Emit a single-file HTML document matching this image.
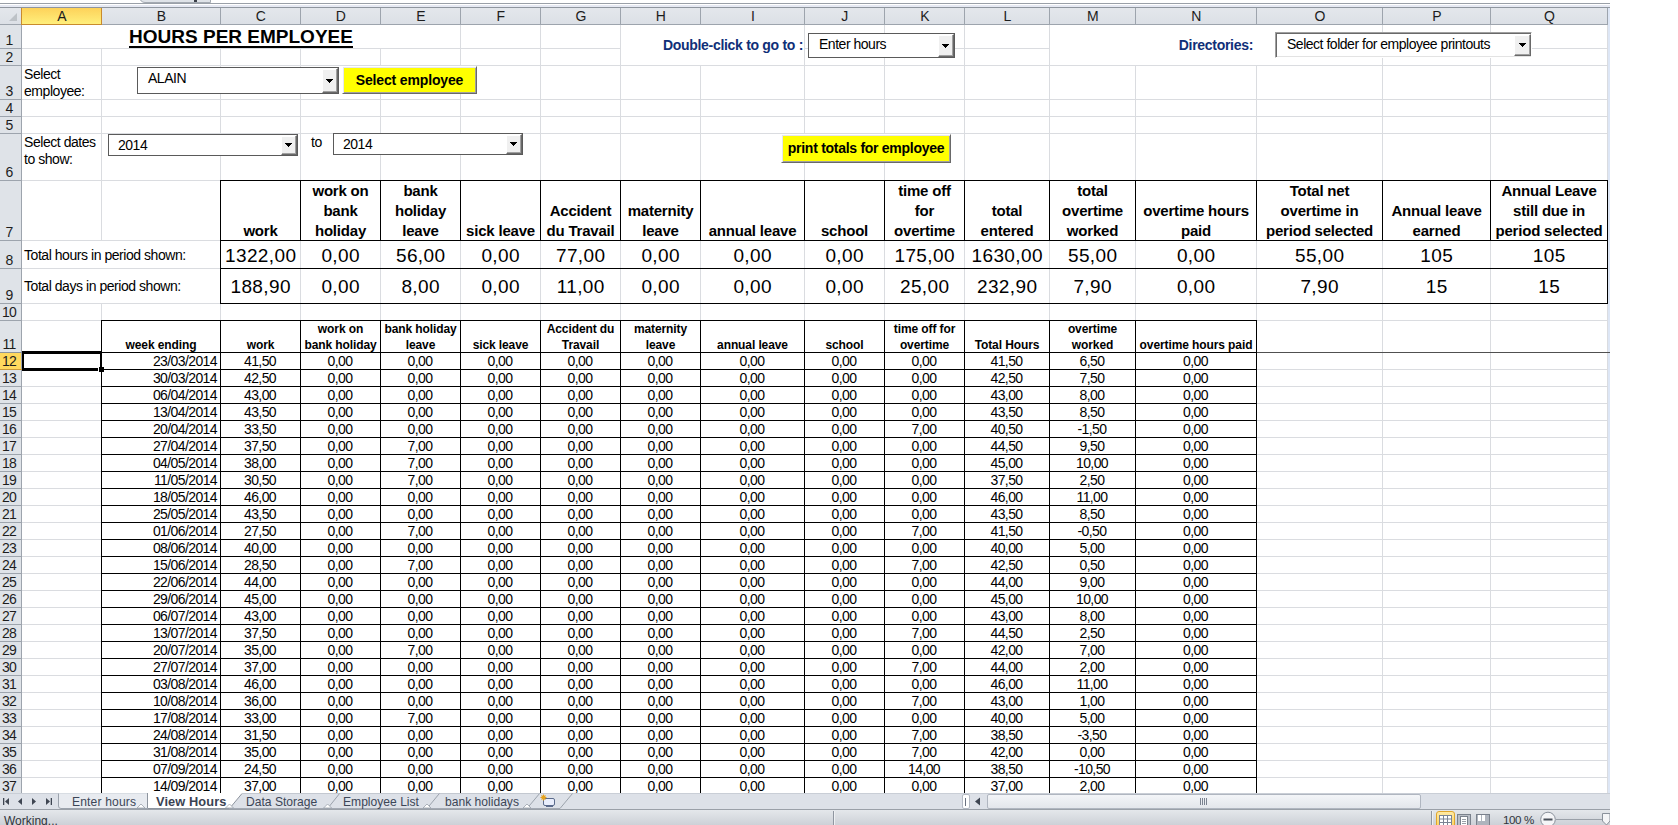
<!DOCTYPE html>
<html><head><meta charset="utf-8"><title>Hours per employee</title>
<style>
html,body{margin:0;padding:0;background:#fff}
body{width:1678px;height:825px;overflow:hidden;position:relative;font-family:"Liberation Sans",Arial,sans-serif;font-size:13.33px;color:#000}
#app{position:absolute;left:0;top:0;width:1610px;height:825px;overflow:hidden;background:#fff}
#app div,#app svg.abs{position:absolute;box-sizing:border-box}
.abs{position:absolute}
.t{display:flex;white-space:nowrap;line-height:17px;letter-spacing:-0.27px}
.ch{justify-content:center;align-items:flex-end;line-height:15px;color:#1d1d1d;font-size:14px;letter-spacing:-0.7px}
.title{justify-content:center;align-items:flex-end;font-weight:bold;font-size:19px;line-height:24px;letter-spacing:0}
.ul{border-bottom:2px solid #000;line-height:19px;display:inline-block;margin-bottom:1px}
.navy{justify-content:flex-end;align-items:center;font-weight:bold;color:#102f78;font-size:14px;letter-spacing:-0.3px;padding-bottom:1px}
.lbl{align-items:flex-end;font-size:14px;letter-spacing:-0.45px;padding-left:2px}
.mid{align-items:center}
.wrap{white-space:normal}
.cb{background:#fff;border:1px solid #5a5a5a}
.cbs{border-color:#a0a0a0 #fff #fff #a0a0a0;box-shadow:inset 1px 1px 0 #696969,inset -1px -1px 0 #e3e3e3}
.cbt{align-items:flex-start;font-size:14px;line-height:16px;letter-spacing:-0.48px}
.cbb{background:#f0f0f0;border:1px solid;border-color:#fff #696969 #696969 #fff;box-shadow:inset -1px -1px 0 #a0a0a0,inset 0 1px 0 #fff}
.yb{background:#ff0;border:1px solid;border-color:#fff #696969 #696969 #fff;box-shadow:inset 1px 1px 0 #e6e6ee,inset -1px -1px 0 #a0a0a0;justify-content:center;align-items:center;font-weight:bold;font-size:14px;letter-spacing:-0.15px;padding-bottom:0}
.h7{justify-content:center;align-items:flex-end;text-align:center;font-weight:bold;font-size:15px;line-height:20px;letter-spacing:-0.2px}
.big{justify-content:center;align-items:center;font-size:19px;line-height:24px;letter-spacing:0.4px;padding-left:0.4px;padding-top:2px}
.h11{justify-content:center;align-items:flex-end;text-align:center;font-weight:bold;font-size:12px;line-height:16px;letter-spacing:-0.1px}
.row{left:0;width:1610px;height:17px}
.d{top:0;height:17px;justify-content:center;align-items:flex-end;font-size:14px;letter-spacing:-0.6px;padding-right:1px}
.dr{justify-content:flex-end;padding-right:3px}
.tab{font-size:12.1px;color:#3c4657;align-items:flex-end;line-height:15px;letter-spacing:0}
.tabact{font-weight:bold;font-size:12.8px;color:#3a4252;letter-spacing:0.1px}
.sb{font-size:12.3px;color:#30343b;align-items:flex-start;line-height:16px;letter-spacing:0}
.sbz{font-size:11.6px;letter-spacing:-0.4px}
.rh{justify-content:center;align-items:flex-end;line-height:15px;color:#1d1d1d;font-size:14px;letter-spacing:-0.8px;padding-right:3px;padding-bottom:1px}
</style></head>
<body><div id="app">
<div class="abs" style="left:139px;top:-7px;width:72px;height:10px;background:#dfe3e8;border:1px solid #a4aab2;border-radius:0 0 0 6px;box-sizing:border-box"></div>
<div style="left:194px;top:0px;width:3px;height:2px;background:#3a3f48;"></div>
<div style="left:0px;top:3px;width:1610px;height:1px;background:#9aa0a8;"></div>
<div style="left:0px;top:4px;width:1610px;height:1px;background:#ffffff;"></div>
<div style="left:0px;top:5px;width:1610px;height:2px;background:#e6e9f3;"></div>
<div style="left:0px;top:7px;width:1610px;height:1px;background:#8f969f;"></div>
<div style="left:101px;top:49px;width:1px;height:192px;background:#dadce0;"></div>
<div style="left:101px;top:304px;width:1px;height:489px;background:#dadce0;"></div>
<div style="left:220px;top:49px;width:1px;height:744px;background:#dadce0;"></div>
<div style="left:300px;top:49px;width:1px;height:744px;background:#dadce0;"></div>
<div style="left:380px;top:49px;width:1px;height:744px;background:#dadce0;"></div>
<div style="left:460px;top:25px;width:1px;height:768px;background:#dadce0;"></div>
<div style="left:540px;top:25px;width:1px;height:768px;background:#dadce0;"></div>
<div style="left:620px;top:25px;width:1px;height:768px;background:#dadce0;"></div>
<div style="left:700px;top:66px;width:1px;height:727px;background:#dadce0;"></div>
<div style="left:804px;top:25px;width:1px;height:768px;background:#dadce0;"></div>
<div style="left:884px;top:25px;width:1px;height:768px;background:#dadce0;"></div>
<div style="left:964px;top:25px;width:1px;height:768px;background:#dadce0;"></div>
<div style="left:1049px;top:25px;width:1px;height:768px;background:#dadce0;"></div>
<div style="left:1135px;top:66px;width:1px;height:727px;background:#dadce0;"></div>
<div style="left:1256px;top:66px;width:1px;height:727px;background:#dadce0;"></div>
<div style="left:1382px;top:25px;width:1px;height:768px;background:#dadce0;"></div>
<div style="left:1490px;top:25px;width:1px;height:768px;background:#dadce0;"></div>
<div style="left:1607px;top:25px;width:1px;height:768px;background:#dadce0;"></div>
<div style="left:22px;top:48px;width:599px;height:1px;background:#dadce0;"></div>
<div style="left:804px;top:48px;width:246px;height:1px;background:#dadce0;"></div>
<div style="left:1382px;top:48px;width:226px;height:1px;background:#dadce0;"></div>
<div style="left:22px;top:65px;width:1586px;height:1px;background:#dadce0;"></div>
<div style="left:22px;top:99px;width:1586px;height:1px;background:#dadce0;"></div>
<div style="left:22px;top:116px;width:1586px;height:1px;background:#dadce0;"></div>
<div style="left:22px;top:133px;width:1586px;height:1px;background:#dadce0;"></div>
<div style="left:22px;top:180px;width:1586px;height:1px;background:#dadce0;"></div>
<div style="left:22px;top:240px;width:1586px;height:1px;background:#dadce0;"></div>
<div style="left:22px;top:268px;width:1586px;height:1px;background:#dadce0;"></div>
<div style="left:22px;top:303px;width:1586px;height:1px;background:#dadce0;"></div>
<div style="left:22px;top:320px;width:1586px;height:1px;background:#dadce0;"></div>
<div style="left:22px;top:352px;width:1586px;height:1px;background:#dadce0;"></div>
<div style="left:22px;top:369px;width:1586px;height:1px;background:#dadce0;"></div>
<div style="left:22px;top:386px;width:1586px;height:1px;background:#dadce0;"></div>
<div style="left:22px;top:403px;width:1586px;height:1px;background:#dadce0;"></div>
<div style="left:22px;top:420px;width:1586px;height:1px;background:#dadce0;"></div>
<div style="left:22px;top:437px;width:1586px;height:1px;background:#dadce0;"></div>
<div style="left:22px;top:454px;width:1586px;height:1px;background:#dadce0;"></div>
<div style="left:22px;top:471px;width:1586px;height:1px;background:#dadce0;"></div>
<div style="left:22px;top:488px;width:1586px;height:1px;background:#dadce0;"></div>
<div style="left:22px;top:505px;width:1586px;height:1px;background:#dadce0;"></div>
<div style="left:22px;top:522px;width:1586px;height:1px;background:#dadce0;"></div>
<div style="left:22px;top:539px;width:1586px;height:1px;background:#dadce0;"></div>
<div style="left:22px;top:556px;width:1586px;height:1px;background:#dadce0;"></div>
<div style="left:22px;top:573px;width:1586px;height:1px;background:#dadce0;"></div>
<div style="left:22px;top:590px;width:1586px;height:1px;background:#dadce0;"></div>
<div style="left:22px;top:607px;width:1586px;height:1px;background:#dadce0;"></div>
<div style="left:22px;top:624px;width:1586px;height:1px;background:#dadce0;"></div>
<div style="left:22px;top:641px;width:1586px;height:1px;background:#dadce0;"></div>
<div style="left:22px;top:658px;width:1586px;height:1px;background:#dadce0;"></div>
<div style="left:22px;top:675px;width:1586px;height:1px;background:#dadce0;"></div>
<div style="left:22px;top:692px;width:1586px;height:1px;background:#dadce0;"></div>
<div style="left:22px;top:709px;width:1586px;height:1px;background:#dadce0;"></div>
<div style="left:22px;top:726px;width:1586px;height:1px;background:#dadce0;"></div>
<div style="left:22px;top:743px;width:1586px;height:1px;background:#dadce0;"></div>
<div style="left:22px;top:760px;width:1586px;height:1px;background:#dadce0;"></div>
<div style="left:22px;top:777px;width:1586px;height:1px;background:#dadce0;"></div>
<div style="left:0px;top:8px;width:1608px;height:16px;background:linear-gradient(#e4e7ec,#dce0e6);"></div>
<div style="left:0px;top:24px;width:1608px;height:1px;background:#9da4ad;"></div>
<div style="left:21px;top:8px;width:1px;height:17px;background:#9da4ad;"></div>
<div style="left:101px;top:8px;width:1px;height:17px;background:#9da4ad;"></div>
<div style="left:220px;top:8px;width:1px;height:17px;background:#9da4ad;"></div>
<div style="left:300px;top:8px;width:1px;height:17px;background:#9da4ad;"></div>
<div style="left:380px;top:8px;width:1px;height:17px;background:#9da4ad;"></div>
<div style="left:460px;top:8px;width:1px;height:17px;background:#9da4ad;"></div>
<div style="left:540px;top:8px;width:1px;height:17px;background:#9da4ad;"></div>
<div style="left:620px;top:8px;width:1px;height:17px;background:#9da4ad;"></div>
<div style="left:700px;top:8px;width:1px;height:17px;background:#9da4ad;"></div>
<div style="left:804px;top:8px;width:1px;height:17px;background:#9da4ad;"></div>
<div style="left:884px;top:8px;width:1px;height:17px;background:#9da4ad;"></div>
<div style="left:964px;top:8px;width:1px;height:17px;background:#9da4ad;"></div>
<div style="left:1049px;top:8px;width:1px;height:17px;background:#9da4ad;"></div>
<div style="left:1135px;top:8px;width:1px;height:17px;background:#9da4ad;"></div>
<div style="left:1256px;top:8px;width:1px;height:17px;background:#9da4ad;"></div>
<div style="left:1382px;top:8px;width:1px;height:17px;background:#9da4ad;"></div>
<div style="left:1490px;top:8px;width:1px;height:17px;background:#9da4ad;"></div>
<div style="left:1607px;top:8px;width:1px;height:17px;background:#9da4ad;"></div>
<div style="left:22px;top:8px;width:79px;height:16px;background:linear-gradient(#fdd25a,#ffef7c);"></div>
<div style="left:21px;top:8px;width:1px;height:17px;background:#c98b2d;"></div>
<div style="left:101px;top:8px;width:1px;height:17px;background:#c98b2d;"></div>
<div style="left:21px;top:24px;width:81px;height:1px;background:#c98b2d;"></div>
<div class="t ch" style="left:22px;top:8px;width:79px;height:16px;">A</div>
<div class="t ch" style="left:102px;top:8px;width:118px;height:16px;">B</div>
<div class="t ch" style="left:221px;top:8px;width:79px;height:16px;">C</div>
<div class="t ch" style="left:301px;top:8px;width:79px;height:16px;">D</div>
<div class="t ch" style="left:381px;top:8px;width:79px;height:16px;">E</div>
<div class="t ch" style="left:461px;top:8px;width:79px;height:16px;">F</div>
<div class="t ch" style="left:541px;top:8px;width:79px;height:16px;">G</div>
<div class="t ch" style="left:621px;top:8px;width:79px;height:16px;">H</div>
<div class="t ch" style="left:701px;top:8px;width:103px;height:16px;">I</div>
<div class="t ch" style="left:805px;top:8px;width:79px;height:16px;">J</div>
<div class="t ch" style="left:885px;top:8px;width:79px;height:16px;">K</div>
<div class="t ch" style="left:965px;top:8px;width:84px;height:16px;">L</div>
<div class="t ch" style="left:1050px;top:8px;width:85px;height:16px;">M</div>
<div class="t ch" style="left:1136px;top:8px;width:120px;height:16px;">N</div>
<div class="t ch" style="left:1257px;top:8px;width:125px;height:16px;">O</div>
<div class="t ch" style="left:1383px;top:8px;width:107px;height:16px;">P</div>
<div class="t ch" style="left:1491px;top:8px;width:116px;height:16px;">Q</div>
<svg class="abs" style="left:8px;top:12px" width="10" height="10"><polygon points="9,1 9,9 1,9" fill="#bdc2c7"/></svg>
<div style="left:0px;top:25px;width:21px;height:768px;background:#dfe3e8;"></div>
<div style="left:21px;top:25px;width:1px;height:768px;background:#9da4ad;"></div>
<div style="left:0px;top:48px;width:21px;height:1px;background:#9da4ad;"></div>
<div style="left:0px;top:65px;width:21px;height:1px;background:#9da4ad;"></div>
<div style="left:0px;top:99px;width:21px;height:1px;background:#9da4ad;"></div>
<div style="left:0px;top:116px;width:21px;height:1px;background:#9da4ad;"></div>
<div style="left:0px;top:133px;width:21px;height:1px;background:#9da4ad;"></div>
<div style="left:0px;top:180px;width:21px;height:1px;background:#9da4ad;"></div>
<div style="left:0px;top:240px;width:21px;height:1px;background:#9da4ad;"></div>
<div style="left:0px;top:268px;width:21px;height:1px;background:#9da4ad;"></div>
<div style="left:0px;top:303px;width:21px;height:1px;background:#9da4ad;"></div>
<div style="left:0px;top:320px;width:21px;height:1px;background:#9da4ad;"></div>
<div style="left:0px;top:352px;width:21px;height:1px;background:#9da4ad;"></div>
<div style="left:0px;top:369px;width:21px;height:1px;background:#9da4ad;"></div>
<div style="left:0px;top:386px;width:21px;height:1px;background:#9da4ad;"></div>
<div style="left:0px;top:403px;width:21px;height:1px;background:#9da4ad;"></div>
<div style="left:0px;top:420px;width:21px;height:1px;background:#9da4ad;"></div>
<div style="left:0px;top:437px;width:21px;height:1px;background:#9da4ad;"></div>
<div style="left:0px;top:454px;width:21px;height:1px;background:#9da4ad;"></div>
<div style="left:0px;top:471px;width:21px;height:1px;background:#9da4ad;"></div>
<div style="left:0px;top:488px;width:21px;height:1px;background:#9da4ad;"></div>
<div style="left:0px;top:505px;width:21px;height:1px;background:#9da4ad;"></div>
<div style="left:0px;top:522px;width:21px;height:1px;background:#9da4ad;"></div>
<div style="left:0px;top:539px;width:21px;height:1px;background:#9da4ad;"></div>
<div style="left:0px;top:556px;width:21px;height:1px;background:#9da4ad;"></div>
<div style="left:0px;top:573px;width:21px;height:1px;background:#9da4ad;"></div>
<div style="left:0px;top:590px;width:21px;height:1px;background:#9da4ad;"></div>
<div style="left:0px;top:607px;width:21px;height:1px;background:#9da4ad;"></div>
<div style="left:0px;top:624px;width:21px;height:1px;background:#9da4ad;"></div>
<div style="left:0px;top:641px;width:21px;height:1px;background:#9da4ad;"></div>
<div style="left:0px;top:658px;width:21px;height:1px;background:#9da4ad;"></div>
<div style="left:0px;top:675px;width:21px;height:1px;background:#9da4ad;"></div>
<div style="left:0px;top:692px;width:21px;height:1px;background:#9da4ad;"></div>
<div style="left:0px;top:709px;width:21px;height:1px;background:#9da4ad;"></div>
<div style="left:0px;top:726px;width:21px;height:1px;background:#9da4ad;"></div>
<div style="left:0px;top:743px;width:21px;height:1px;background:#9da4ad;"></div>
<div style="left:0px;top:760px;width:21px;height:1px;background:#9da4ad;"></div>
<div style="left:0px;top:777px;width:21px;height:1px;background:#9da4ad;"></div>
<div style="left:0px;top:353px;width:21px;height:16px;background:#ffd85e;"></div>
<div style="left:0px;top:369px;width:22px;height:1px;background:#c9983a;"></div>
<div style="left:0px;top:352px;width:22px;height:1px;background:#8e949b;"></div>
<div class="t rh" style="left:0px;top:25px;width:21px;height:24px;">1</div>
<div class="t rh" style="left:0px;top:49px;width:21px;height:17px;">2</div>
<div class="t rh" style="left:0px;top:66px;width:21px;height:34px;">3</div>
<div class="t rh" style="left:0px;top:100px;width:21px;height:17px;">4</div>
<div class="t rh" style="left:0px;top:117px;width:21px;height:17px;">5</div>
<div class="t rh" style="left:0px;top:134px;width:21px;height:47px;">6</div>
<div class="t rh" style="left:0px;top:181px;width:21px;height:60px;">7</div>
<div class="t rh" style="left:0px;top:241px;width:21px;height:28px;">8</div>
<div class="t rh" style="left:0px;top:269px;width:21px;height:35px;">9</div>
<div class="t rh" style="left:0px;top:304px;width:21px;height:17px;">10</div>
<div class="t rh" style="left:0px;top:321px;width:21px;height:32px;">11</div>
<div class="t rh" style="left:0px;top:353px;width:21px;height:17px;">12</div>
<div class="t rh" style="left:0px;top:370px;width:21px;height:17px;">13</div>
<div class="t rh" style="left:0px;top:387px;width:21px;height:17px;">14</div>
<div class="t rh" style="left:0px;top:404px;width:21px;height:17px;">15</div>
<div class="t rh" style="left:0px;top:421px;width:21px;height:17px;">16</div>
<div class="t rh" style="left:0px;top:438px;width:21px;height:17px;">17</div>
<div class="t rh" style="left:0px;top:455px;width:21px;height:17px;">18</div>
<div class="t rh" style="left:0px;top:472px;width:21px;height:17px;">19</div>
<div class="t rh" style="left:0px;top:489px;width:21px;height:17px;">20</div>
<div class="t rh" style="left:0px;top:506px;width:21px;height:17px;">21</div>
<div class="t rh" style="left:0px;top:523px;width:21px;height:17px;">22</div>
<div class="t rh" style="left:0px;top:540px;width:21px;height:17px;">23</div>
<div class="t rh" style="left:0px;top:557px;width:21px;height:17px;">24</div>
<div class="t rh" style="left:0px;top:574px;width:21px;height:17px;">25</div>
<div class="t rh" style="left:0px;top:591px;width:21px;height:17px;">26</div>
<div class="t rh" style="left:0px;top:608px;width:21px;height:17px;">27</div>
<div class="t rh" style="left:0px;top:625px;width:21px;height:17px;">28</div>
<div class="t rh" style="left:0px;top:642px;width:21px;height:17px;">29</div>
<div class="t rh" style="left:0px;top:659px;width:21px;height:17px;">30</div>
<div class="t rh" style="left:0px;top:676px;width:21px;height:17px;">31</div>
<div class="t rh" style="left:0px;top:693px;width:21px;height:17px;">32</div>
<div class="t rh" style="left:0px;top:710px;width:21px;height:17px;">33</div>
<div class="t rh" style="left:0px;top:727px;width:21px;height:17px;">34</div>
<div class="t rh" style="left:0px;top:744px;width:21px;height:17px;">35</div>
<div class="t rh" style="left:0px;top:761px;width:21px;height:17px;">36</div>
<div class="t rh" style="left:0px;top:778px;width:21px;height:17px;">37</div>
<div style="left:1608px;top:8px;width:2px;height:785px;background:#dde6f5;"></div>
<div class="t title" style="left:22px;top:25px;width:438px;height:24px;"><span class="ul">HOURS PER EMPLOYEE</span></div>
<div class="t navy" style="left:621px;top:25px;width:183px;height:41px;padding-right:1px">Double-click to go to :</div>
<div class="t navy" style="left:1050px;top:25px;width:206px;height:41px;padding-right:3px;letter-spacing:-0.3px">Directories:</div>
<div class="t lbl wrap" style="left:22px;top:66px;width:79px;height:34px;">Select<br>employee:</div>
<div class="t lbl wrap" style="left:22px;top:134px;width:79px;height:47px;align-items:flex-start">Select dates<br>to show:</div>
<div class="t lbl" style="left:309px;top:134px;width:30px;height:17px;">to</div>
<div class="t lbl mid" style="left:22px;top:241px;width:198px;height:28px;">Total hours in period shown:</div>
<div class="t lbl mid" style="left:22px;top:269px;width:198px;height:35px;">Total days in period shown:</div>
<div class="cb" style="left:137px;top:67px;width:202px;height:27px"><div class="t cbt" style="left:10px;top:2px;height:16px;width:172px">ALAIN</div><div class="cbb" style="right:0;top:0;width:16px;height:25px"><svg class="abs" style="left:3px;top:10px" width="7" height="4"><path d="M0,0H7V1H6V2H5V3H4V4H3V3H2V2H1V1H0Z" fill="#000"/></svg></div></div>
<div class="cb" style="left:108px;top:134px;width:190px;height:22px"><div class="t cbt" style="left:9px;top:2px;height:16px;width:160px">2014</div><div class="cbb" style="right:0;top:0;width:16px;height:20px"><svg class="abs" style="left:3px;top:7px" width="7" height="4"><path d="M0,0H7V1H6V2H5V3H4V4H3V3H2V2H1V1H0Z" fill="#000"/></svg></div></div>
<div class="cb" style="left:333px;top:133px;width:190px;height:22px"><div class="t cbt" style="left:9px;top:2px;height:16px;width:160px">2014</div><div class="cbb" style="right:0;top:0;width:16px;height:20px"><svg class="abs" style="left:3px;top:7px" width="7" height="4"><path d="M0,0H7V1H6V2H5V3H4V4H3V3H2V2H1V1H0Z" fill="#000"/></svg></div></div>
<div class="cb" style="left:808px;top:33px;width:147px;height:25px"><div class="t cbt" style="left:10px;top:2px;height:16px;width:117px">Enter hours</div><div class="cbb" style="right:0;top:0;width:16px;height:23px"><svg class="abs" style="left:3px;top:9px" width="7" height="4"><path d="M0,0H7V1H6V2H5V3H4V4H3V3H2V2H1V1H0Z" fill="#000"/></svg></div></div>
<div class="cb cbs" style="left:1275px;top:32px;width:257px;height:26px"><div class="t cbt" style="left:11px;top:3px;height:16px;width:226px">Select folder for employee printouts</div><div class="cbb" style="right:0;top:1px;width:17px;height:22px"><svg class="abs" style="left:4px;top:8px" width="7" height="4"><path d="M0,0H7V1H6V2H5V3H4V4H3V3H2V2H1V1H0Z" fill="#000"/></svg></div></div>
<div class="yb t" style="left:342px;top:66px;width:135px;height:28px">Select employee</div>
<div class="yb t" style="left:781px;top:134px;width:170px;height:29px"><span style="letter-spacing:-0.28px">print totals for employee</span></div>
<div class="t h7" style="left:221px;top:181px;width:79px;height:60px;">work</div>
<div class="t big" style="left:221px;top:241px;width:79px;height:28px;">1322,00</div>
<div class="t big" style="left:221px;top:269px;width:79px;height:35px;padding-top:0">188,90</div>
<div class="t h7" style="left:301px;top:181px;width:79px;height:60px;">work on<br>bank<br>holiday</div>
<div class="t big" style="left:301px;top:241px;width:79px;height:28px;">0,00</div>
<div class="t big" style="left:301px;top:269px;width:79px;height:35px;padding-top:0">0,00</div>
<div class="t h7" style="left:381px;top:181px;width:79px;height:60px;">bank<br>holiday<br>leave</div>
<div class="t big" style="left:381px;top:241px;width:79px;height:28px;">56,00</div>
<div class="t big" style="left:381px;top:269px;width:79px;height:35px;padding-top:0">8,00</div>
<div class="t h7" style="left:461px;top:181px;width:79px;height:60px;">sick leave</div>
<div class="t big" style="left:461px;top:241px;width:79px;height:28px;">0,00</div>
<div class="t big" style="left:461px;top:269px;width:79px;height:35px;padding-top:0">0,00</div>
<div class="t h7" style="left:541px;top:181px;width:79px;height:60px;">Accident<br>du Travail</div>
<div class="t big" style="left:541px;top:241px;width:79px;height:28px;">77,00</div>
<div class="t big" style="left:541px;top:269px;width:79px;height:35px;padding-top:0">11,00</div>
<div class="t h7" style="left:621px;top:181px;width:79px;height:60px;">maternity<br>leave</div>
<div class="t big" style="left:621px;top:241px;width:79px;height:28px;">0,00</div>
<div class="t big" style="left:621px;top:269px;width:79px;height:35px;padding-top:0">0,00</div>
<div class="t h7" style="left:701px;top:181px;width:103px;height:60px;">annual leave</div>
<div class="t big" style="left:701px;top:241px;width:103px;height:28px;">0,00</div>
<div class="t big" style="left:701px;top:269px;width:103px;height:35px;padding-top:0">0,00</div>
<div class="t h7" style="left:805px;top:181px;width:79px;height:60px;">school</div>
<div class="t big" style="left:805px;top:241px;width:79px;height:28px;">0,00</div>
<div class="t big" style="left:805px;top:269px;width:79px;height:35px;padding-top:0">0,00</div>
<div class="t h7" style="left:885px;top:181px;width:79px;height:60px;">time off<br>for<br>overtime</div>
<div class="t big" style="left:885px;top:241px;width:79px;height:28px;">175,00</div>
<div class="t big" style="left:885px;top:269px;width:79px;height:35px;padding-top:0">25,00</div>
<div class="t h7" style="left:965px;top:181px;width:84px;height:60px;">total<br>entered</div>
<div class="t big" style="left:965px;top:241px;width:84px;height:28px;">1630,00</div>
<div class="t big" style="left:965px;top:269px;width:84px;height:35px;padding-top:0">232,90</div>
<div class="t h7" style="left:1050px;top:181px;width:85px;height:60px;">total<br>overtime<br>worked</div>
<div class="t big" style="left:1050px;top:241px;width:85px;height:28px;">55,00</div>
<div class="t big" style="left:1050px;top:269px;width:85px;height:35px;padding-top:0">7,90</div>
<div class="t h7" style="left:1136px;top:181px;width:120px;height:60px;">overtime hours<br>paid</div>
<div class="t big" style="left:1136px;top:241px;width:120px;height:28px;">0,00</div>
<div class="t big" style="left:1136px;top:269px;width:120px;height:35px;padding-top:0">0,00</div>
<div class="t h7" style="left:1257px;top:181px;width:125px;height:60px;">Total net<br>overtime in<br>period selected</div>
<div class="t big" style="left:1257px;top:241px;width:125px;height:28px;">55,00</div>
<div class="t big" style="left:1257px;top:269px;width:125px;height:35px;padding-top:0">7,90</div>
<div class="t h7" style="left:1383px;top:181px;width:107px;height:60px;">Annual leave<br>earned</div>
<div class="t big" style="left:1383px;top:241px;width:107px;height:28px;">105</div>
<div class="t big" style="left:1383px;top:269px;width:107px;height:35px;padding-top:0">15</div>
<div class="t h7" style="left:1491px;top:181px;width:116px;height:60px;">Annual Leave<br>still due in<br>period selected</div>
<div class="t big" style="left:1491px;top:241px;width:116px;height:28px;">105</div>
<div class="t big" style="left:1491px;top:269px;width:116px;height:35px;padding-top:0">15</div>
<div style="left:220px;top:180px;width:1388px;height:1px;background:#000;"></div>
<div style="left:220px;top:240px;width:1388px;height:1px;background:#000;"></div>
<div style="left:220px;top:268px;width:1388px;height:1px;background:#000;"></div>
<div style="left:220px;top:303px;width:1388px;height:1px;background:#000;"></div>
<div style="left:220px;top:180px;width:1px;height:61px;background:#000;"></div>
<div style="left:300px;top:180px;width:1px;height:61px;background:#000;"></div>
<div style="left:380px;top:180px;width:1px;height:61px;background:#000;"></div>
<div style="left:460px;top:180px;width:1px;height:61px;background:#000;"></div>
<div style="left:540px;top:180px;width:1px;height:61px;background:#000;"></div>
<div style="left:620px;top:180px;width:1px;height:61px;background:#000;"></div>
<div style="left:700px;top:180px;width:1px;height:61px;background:#000;"></div>
<div style="left:804px;top:180px;width:1px;height:61px;background:#000;"></div>
<div style="left:884px;top:180px;width:1px;height:61px;background:#000;"></div>
<div style="left:964px;top:180px;width:1px;height:61px;background:#000;"></div>
<div style="left:1049px;top:180px;width:1px;height:61px;background:#000;"></div>
<div style="left:1135px;top:180px;width:1px;height:61px;background:#000;"></div>
<div style="left:1256px;top:180px;width:1px;height:61px;background:#000;"></div>
<div style="left:1382px;top:180px;width:1px;height:61px;background:#000;"></div>
<div style="left:1490px;top:180px;width:1px;height:61px;background:#000;"></div>
<div style="left:1607px;top:180px;width:1px;height:61px;background:#000;"></div>
<div style="left:220px;top:180px;width:1px;height:124px;background:#000;"></div>
<div style="left:1607px;top:180px;width:1px;height:124px;background:#000;"></div>
<div class="t h11" style="left:102px;top:321px;width:118px;height:32px;">week ending</div>
<div class="t h11" style="left:221px;top:321px;width:79px;height:32px;">work</div>
<div class="t h11" style="left:301px;top:321px;width:79px;height:32px;">work on<br>bank holiday</div>
<div class="t h11" style="left:381px;top:321px;width:79px;height:32px;">bank holiday<br>leave</div>
<div class="t h11" style="left:461px;top:321px;width:79px;height:32px;">sick leave</div>
<div class="t h11" style="left:541px;top:321px;width:79px;height:32px;">Accident du<br>Travail</div>
<div class="t h11" style="left:621px;top:321px;width:79px;height:32px;">maternity<br>leave</div>
<div class="t h11" style="left:701px;top:321px;width:103px;height:32px;">annual leave</div>
<div class="t h11" style="left:805px;top:321px;width:79px;height:32px;">school</div>
<div class="t h11" style="left:885px;top:321px;width:79px;height:32px;">time off for<br>overtime</div>
<div class="t h11" style="left:965px;top:321px;width:84px;height:32px;">Total Hours</div>
<div class="t h11" style="left:1050px;top:321px;width:85px;height:32px;">overtime<br>worked</div>
<div class="t h11" style="left:1136px;top:321px;width:120px;height:32px;">overtime hours paid</div>
<div class="row" style="top:353px"><div class="t d dr" style="left:102px;width:118px">23/03/2014</div><div class="t d" style="left:221px;width:79px">41,50</div><div class="t d" style="left:301px;width:79px">0,00</div><div class="t d" style="left:381px;width:79px">0,00</div><div class="t d" style="left:461px;width:79px">0,00</div><div class="t d" style="left:541px;width:79px">0,00</div><div class="t d" style="left:621px;width:79px">0,00</div><div class="t d" style="left:701px;width:103px">0,00</div><div class="t d" style="left:805px;width:79px">0,00</div><div class="t d" style="left:885px;width:79px">0,00</div><div class="t d" style="left:965px;width:84px">41,50</div><div class="t d" style="left:1050px;width:85px">6,50</div><div class="t d" style="left:1136px;width:120px">0,00</div></div>
<div class="row" style="top:370px"><div class="t d dr" style="left:102px;width:118px">30/03/2014</div><div class="t d" style="left:221px;width:79px">42,50</div><div class="t d" style="left:301px;width:79px">0,00</div><div class="t d" style="left:381px;width:79px">0,00</div><div class="t d" style="left:461px;width:79px">0,00</div><div class="t d" style="left:541px;width:79px">0,00</div><div class="t d" style="left:621px;width:79px">0,00</div><div class="t d" style="left:701px;width:103px">0,00</div><div class="t d" style="left:805px;width:79px">0,00</div><div class="t d" style="left:885px;width:79px">0,00</div><div class="t d" style="left:965px;width:84px">42,50</div><div class="t d" style="left:1050px;width:85px">7,50</div><div class="t d" style="left:1136px;width:120px">0,00</div></div>
<div class="row" style="top:387px"><div class="t d dr" style="left:102px;width:118px">06/04/2014</div><div class="t d" style="left:221px;width:79px">43,00</div><div class="t d" style="left:301px;width:79px">0,00</div><div class="t d" style="left:381px;width:79px">0,00</div><div class="t d" style="left:461px;width:79px">0,00</div><div class="t d" style="left:541px;width:79px">0,00</div><div class="t d" style="left:621px;width:79px">0,00</div><div class="t d" style="left:701px;width:103px">0,00</div><div class="t d" style="left:805px;width:79px">0,00</div><div class="t d" style="left:885px;width:79px">0,00</div><div class="t d" style="left:965px;width:84px">43,00</div><div class="t d" style="left:1050px;width:85px">8,00</div><div class="t d" style="left:1136px;width:120px">0,00</div></div>
<div class="row" style="top:404px"><div class="t d dr" style="left:102px;width:118px">13/04/2014</div><div class="t d" style="left:221px;width:79px">43,50</div><div class="t d" style="left:301px;width:79px">0,00</div><div class="t d" style="left:381px;width:79px">0,00</div><div class="t d" style="left:461px;width:79px">0,00</div><div class="t d" style="left:541px;width:79px">0,00</div><div class="t d" style="left:621px;width:79px">0,00</div><div class="t d" style="left:701px;width:103px">0,00</div><div class="t d" style="left:805px;width:79px">0,00</div><div class="t d" style="left:885px;width:79px">0,00</div><div class="t d" style="left:965px;width:84px">43,50</div><div class="t d" style="left:1050px;width:85px">8,50</div><div class="t d" style="left:1136px;width:120px">0,00</div></div>
<div class="row" style="top:421px"><div class="t d dr" style="left:102px;width:118px">20/04/2014</div><div class="t d" style="left:221px;width:79px">33,50</div><div class="t d" style="left:301px;width:79px">0,00</div><div class="t d" style="left:381px;width:79px">0,00</div><div class="t d" style="left:461px;width:79px">0,00</div><div class="t d" style="left:541px;width:79px">0,00</div><div class="t d" style="left:621px;width:79px">0,00</div><div class="t d" style="left:701px;width:103px">0,00</div><div class="t d" style="left:805px;width:79px">0,00</div><div class="t d" style="left:885px;width:79px">7,00</div><div class="t d" style="left:965px;width:84px">40,50</div><div class="t d" style="left:1050px;width:85px">-1,50</div><div class="t d" style="left:1136px;width:120px">0,00</div></div>
<div class="row" style="top:438px"><div class="t d dr" style="left:102px;width:118px">27/04/2014</div><div class="t d" style="left:221px;width:79px">37,50</div><div class="t d" style="left:301px;width:79px">0,00</div><div class="t d" style="left:381px;width:79px">7,00</div><div class="t d" style="left:461px;width:79px">0,00</div><div class="t d" style="left:541px;width:79px">0,00</div><div class="t d" style="left:621px;width:79px">0,00</div><div class="t d" style="left:701px;width:103px">0,00</div><div class="t d" style="left:805px;width:79px">0,00</div><div class="t d" style="left:885px;width:79px">0,00</div><div class="t d" style="left:965px;width:84px">44,50</div><div class="t d" style="left:1050px;width:85px">9,50</div><div class="t d" style="left:1136px;width:120px">0,00</div></div>
<div class="row" style="top:455px"><div class="t d dr" style="left:102px;width:118px">04/05/2014</div><div class="t d" style="left:221px;width:79px">38,00</div><div class="t d" style="left:301px;width:79px">0,00</div><div class="t d" style="left:381px;width:79px">7,00</div><div class="t d" style="left:461px;width:79px">0,00</div><div class="t d" style="left:541px;width:79px">0,00</div><div class="t d" style="left:621px;width:79px">0,00</div><div class="t d" style="left:701px;width:103px">0,00</div><div class="t d" style="left:805px;width:79px">0,00</div><div class="t d" style="left:885px;width:79px">0,00</div><div class="t d" style="left:965px;width:84px">45,00</div><div class="t d" style="left:1050px;width:85px">10,00</div><div class="t d" style="left:1136px;width:120px">0,00</div></div>
<div class="row" style="top:472px"><div class="t d dr" style="left:102px;width:118px">11/05/2014</div><div class="t d" style="left:221px;width:79px">30,50</div><div class="t d" style="left:301px;width:79px">0,00</div><div class="t d" style="left:381px;width:79px">7,00</div><div class="t d" style="left:461px;width:79px">0,00</div><div class="t d" style="left:541px;width:79px">0,00</div><div class="t d" style="left:621px;width:79px">0,00</div><div class="t d" style="left:701px;width:103px">0,00</div><div class="t d" style="left:805px;width:79px">0,00</div><div class="t d" style="left:885px;width:79px">0,00</div><div class="t d" style="left:965px;width:84px">37,50</div><div class="t d" style="left:1050px;width:85px">2,50</div><div class="t d" style="left:1136px;width:120px">0,00</div></div>
<div class="row" style="top:489px"><div class="t d dr" style="left:102px;width:118px">18/05/2014</div><div class="t d" style="left:221px;width:79px">46,00</div><div class="t d" style="left:301px;width:79px">0,00</div><div class="t d" style="left:381px;width:79px">0,00</div><div class="t d" style="left:461px;width:79px">0,00</div><div class="t d" style="left:541px;width:79px">0,00</div><div class="t d" style="left:621px;width:79px">0,00</div><div class="t d" style="left:701px;width:103px">0,00</div><div class="t d" style="left:805px;width:79px">0,00</div><div class="t d" style="left:885px;width:79px">0,00</div><div class="t d" style="left:965px;width:84px">46,00</div><div class="t d" style="left:1050px;width:85px">11,00</div><div class="t d" style="left:1136px;width:120px">0,00</div></div>
<div class="row" style="top:506px"><div class="t d dr" style="left:102px;width:118px">25/05/2014</div><div class="t d" style="left:221px;width:79px">43,50</div><div class="t d" style="left:301px;width:79px">0,00</div><div class="t d" style="left:381px;width:79px">0,00</div><div class="t d" style="left:461px;width:79px">0,00</div><div class="t d" style="left:541px;width:79px">0,00</div><div class="t d" style="left:621px;width:79px">0,00</div><div class="t d" style="left:701px;width:103px">0,00</div><div class="t d" style="left:805px;width:79px">0,00</div><div class="t d" style="left:885px;width:79px">0,00</div><div class="t d" style="left:965px;width:84px">43,50</div><div class="t d" style="left:1050px;width:85px">8,50</div><div class="t d" style="left:1136px;width:120px">0,00</div></div>
<div class="row" style="top:523px"><div class="t d dr" style="left:102px;width:118px">01/06/2014</div><div class="t d" style="left:221px;width:79px">27,50</div><div class="t d" style="left:301px;width:79px">0,00</div><div class="t d" style="left:381px;width:79px">7,00</div><div class="t d" style="left:461px;width:79px">0,00</div><div class="t d" style="left:541px;width:79px">0,00</div><div class="t d" style="left:621px;width:79px">0,00</div><div class="t d" style="left:701px;width:103px">0,00</div><div class="t d" style="left:805px;width:79px">0,00</div><div class="t d" style="left:885px;width:79px">7,00</div><div class="t d" style="left:965px;width:84px">41,50</div><div class="t d" style="left:1050px;width:85px">-0,50</div><div class="t d" style="left:1136px;width:120px">0,00</div></div>
<div class="row" style="top:540px"><div class="t d dr" style="left:102px;width:118px">08/06/2014</div><div class="t d" style="left:221px;width:79px">40,00</div><div class="t d" style="left:301px;width:79px">0,00</div><div class="t d" style="left:381px;width:79px">0,00</div><div class="t d" style="left:461px;width:79px">0,00</div><div class="t d" style="left:541px;width:79px">0,00</div><div class="t d" style="left:621px;width:79px">0,00</div><div class="t d" style="left:701px;width:103px">0,00</div><div class="t d" style="left:805px;width:79px">0,00</div><div class="t d" style="left:885px;width:79px">0,00</div><div class="t d" style="left:965px;width:84px">40,00</div><div class="t d" style="left:1050px;width:85px">5,00</div><div class="t d" style="left:1136px;width:120px">0,00</div></div>
<div class="row" style="top:557px"><div class="t d dr" style="left:102px;width:118px">15/06/2014</div><div class="t d" style="left:221px;width:79px">28,50</div><div class="t d" style="left:301px;width:79px">0,00</div><div class="t d" style="left:381px;width:79px">7,00</div><div class="t d" style="left:461px;width:79px">0,00</div><div class="t d" style="left:541px;width:79px">0,00</div><div class="t d" style="left:621px;width:79px">0,00</div><div class="t d" style="left:701px;width:103px">0,00</div><div class="t d" style="left:805px;width:79px">0,00</div><div class="t d" style="left:885px;width:79px">7,00</div><div class="t d" style="left:965px;width:84px">42,50</div><div class="t d" style="left:1050px;width:85px">0,50</div><div class="t d" style="left:1136px;width:120px">0,00</div></div>
<div class="row" style="top:574px"><div class="t d dr" style="left:102px;width:118px">22/06/2014</div><div class="t d" style="left:221px;width:79px">44,00</div><div class="t d" style="left:301px;width:79px">0,00</div><div class="t d" style="left:381px;width:79px">0,00</div><div class="t d" style="left:461px;width:79px">0,00</div><div class="t d" style="left:541px;width:79px">0,00</div><div class="t d" style="left:621px;width:79px">0,00</div><div class="t d" style="left:701px;width:103px">0,00</div><div class="t d" style="left:805px;width:79px">0,00</div><div class="t d" style="left:885px;width:79px">0,00</div><div class="t d" style="left:965px;width:84px">44,00</div><div class="t d" style="left:1050px;width:85px">9,00</div><div class="t d" style="left:1136px;width:120px">0,00</div></div>
<div class="row" style="top:591px"><div class="t d dr" style="left:102px;width:118px">29/06/2014</div><div class="t d" style="left:221px;width:79px">45,00</div><div class="t d" style="left:301px;width:79px">0,00</div><div class="t d" style="left:381px;width:79px">0,00</div><div class="t d" style="left:461px;width:79px">0,00</div><div class="t d" style="left:541px;width:79px">0,00</div><div class="t d" style="left:621px;width:79px">0,00</div><div class="t d" style="left:701px;width:103px">0,00</div><div class="t d" style="left:805px;width:79px">0,00</div><div class="t d" style="left:885px;width:79px">0,00</div><div class="t d" style="left:965px;width:84px">45,00</div><div class="t d" style="left:1050px;width:85px">10,00</div><div class="t d" style="left:1136px;width:120px">0,00</div></div>
<div class="row" style="top:608px"><div class="t d dr" style="left:102px;width:118px">06/07/2014</div><div class="t d" style="left:221px;width:79px">43,00</div><div class="t d" style="left:301px;width:79px">0,00</div><div class="t d" style="left:381px;width:79px">0,00</div><div class="t d" style="left:461px;width:79px">0,00</div><div class="t d" style="left:541px;width:79px">0,00</div><div class="t d" style="left:621px;width:79px">0,00</div><div class="t d" style="left:701px;width:103px">0,00</div><div class="t d" style="left:805px;width:79px">0,00</div><div class="t d" style="left:885px;width:79px">0,00</div><div class="t d" style="left:965px;width:84px">43,00</div><div class="t d" style="left:1050px;width:85px">8,00</div><div class="t d" style="left:1136px;width:120px">0,00</div></div>
<div class="row" style="top:625px"><div class="t d dr" style="left:102px;width:118px">13/07/2014</div><div class="t d" style="left:221px;width:79px">37,50</div><div class="t d" style="left:301px;width:79px">0,00</div><div class="t d" style="left:381px;width:79px">0,00</div><div class="t d" style="left:461px;width:79px">0,00</div><div class="t d" style="left:541px;width:79px">0,00</div><div class="t d" style="left:621px;width:79px">0,00</div><div class="t d" style="left:701px;width:103px">0,00</div><div class="t d" style="left:805px;width:79px">0,00</div><div class="t d" style="left:885px;width:79px">7,00</div><div class="t d" style="left:965px;width:84px">44,50</div><div class="t d" style="left:1050px;width:85px">2,50</div><div class="t d" style="left:1136px;width:120px">0,00</div></div>
<div class="row" style="top:642px"><div class="t d dr" style="left:102px;width:118px">20/07/2014</div><div class="t d" style="left:221px;width:79px">35,00</div><div class="t d" style="left:301px;width:79px">0,00</div><div class="t d" style="left:381px;width:79px">7,00</div><div class="t d" style="left:461px;width:79px">0,00</div><div class="t d" style="left:541px;width:79px">0,00</div><div class="t d" style="left:621px;width:79px">0,00</div><div class="t d" style="left:701px;width:103px">0,00</div><div class="t d" style="left:805px;width:79px">0,00</div><div class="t d" style="left:885px;width:79px">0,00</div><div class="t d" style="left:965px;width:84px">42,00</div><div class="t d" style="left:1050px;width:85px">7,00</div><div class="t d" style="left:1136px;width:120px">0,00</div></div>
<div class="row" style="top:659px"><div class="t d dr" style="left:102px;width:118px">27/07/2014</div><div class="t d" style="left:221px;width:79px">37,00</div><div class="t d" style="left:301px;width:79px">0,00</div><div class="t d" style="left:381px;width:79px">0,00</div><div class="t d" style="left:461px;width:79px">0,00</div><div class="t d" style="left:541px;width:79px">0,00</div><div class="t d" style="left:621px;width:79px">0,00</div><div class="t d" style="left:701px;width:103px">0,00</div><div class="t d" style="left:805px;width:79px">0,00</div><div class="t d" style="left:885px;width:79px">7,00</div><div class="t d" style="left:965px;width:84px">44,00</div><div class="t d" style="left:1050px;width:85px">2,00</div><div class="t d" style="left:1136px;width:120px">0,00</div></div>
<div class="row" style="top:676px"><div class="t d dr" style="left:102px;width:118px">03/08/2014</div><div class="t d" style="left:221px;width:79px">46,00</div><div class="t d" style="left:301px;width:79px">0,00</div><div class="t d" style="left:381px;width:79px">0,00</div><div class="t d" style="left:461px;width:79px">0,00</div><div class="t d" style="left:541px;width:79px">0,00</div><div class="t d" style="left:621px;width:79px">0,00</div><div class="t d" style="left:701px;width:103px">0,00</div><div class="t d" style="left:805px;width:79px">0,00</div><div class="t d" style="left:885px;width:79px">0,00</div><div class="t d" style="left:965px;width:84px">46,00</div><div class="t d" style="left:1050px;width:85px">11,00</div><div class="t d" style="left:1136px;width:120px">0,00</div></div>
<div class="row" style="top:693px"><div class="t d dr" style="left:102px;width:118px">10/08/2014</div><div class="t d" style="left:221px;width:79px">36,00</div><div class="t d" style="left:301px;width:79px">0,00</div><div class="t d" style="left:381px;width:79px">0,00</div><div class="t d" style="left:461px;width:79px">0,00</div><div class="t d" style="left:541px;width:79px">0,00</div><div class="t d" style="left:621px;width:79px">0,00</div><div class="t d" style="left:701px;width:103px">0,00</div><div class="t d" style="left:805px;width:79px">0,00</div><div class="t d" style="left:885px;width:79px">7,00</div><div class="t d" style="left:965px;width:84px">43,00</div><div class="t d" style="left:1050px;width:85px">1,00</div><div class="t d" style="left:1136px;width:120px">0,00</div></div>
<div class="row" style="top:710px"><div class="t d dr" style="left:102px;width:118px">17/08/2014</div><div class="t d" style="left:221px;width:79px">33,00</div><div class="t d" style="left:301px;width:79px">0,00</div><div class="t d" style="left:381px;width:79px">7,00</div><div class="t d" style="left:461px;width:79px">0,00</div><div class="t d" style="left:541px;width:79px">0,00</div><div class="t d" style="left:621px;width:79px">0,00</div><div class="t d" style="left:701px;width:103px">0,00</div><div class="t d" style="left:805px;width:79px">0,00</div><div class="t d" style="left:885px;width:79px">0,00</div><div class="t d" style="left:965px;width:84px">40,00</div><div class="t d" style="left:1050px;width:85px">5,00</div><div class="t d" style="left:1136px;width:120px">0,00</div></div>
<div class="row" style="top:727px"><div class="t d dr" style="left:102px;width:118px">24/08/2014</div><div class="t d" style="left:221px;width:79px">31,50</div><div class="t d" style="left:301px;width:79px">0,00</div><div class="t d" style="left:381px;width:79px">0,00</div><div class="t d" style="left:461px;width:79px">0,00</div><div class="t d" style="left:541px;width:79px">0,00</div><div class="t d" style="left:621px;width:79px">0,00</div><div class="t d" style="left:701px;width:103px">0,00</div><div class="t d" style="left:805px;width:79px">0,00</div><div class="t d" style="left:885px;width:79px">7,00</div><div class="t d" style="left:965px;width:84px">38,50</div><div class="t d" style="left:1050px;width:85px">-3,50</div><div class="t d" style="left:1136px;width:120px">0,00</div></div>
<div class="row" style="top:744px"><div class="t d dr" style="left:102px;width:118px">31/08/2014</div><div class="t d" style="left:221px;width:79px">35,00</div><div class="t d" style="left:301px;width:79px">0,00</div><div class="t d" style="left:381px;width:79px">0,00</div><div class="t d" style="left:461px;width:79px">0,00</div><div class="t d" style="left:541px;width:79px">0,00</div><div class="t d" style="left:621px;width:79px">0,00</div><div class="t d" style="left:701px;width:103px">0,00</div><div class="t d" style="left:805px;width:79px">0,00</div><div class="t d" style="left:885px;width:79px">7,00</div><div class="t d" style="left:965px;width:84px">42,00</div><div class="t d" style="left:1050px;width:85px">0,00</div><div class="t d" style="left:1136px;width:120px">0,00</div></div>
<div class="row" style="top:761px"><div class="t d dr" style="left:102px;width:118px">07/09/2014</div><div class="t d" style="left:221px;width:79px">24,50</div><div class="t d" style="left:301px;width:79px">0,00</div><div class="t d" style="left:381px;width:79px">0,00</div><div class="t d" style="left:461px;width:79px">0,00</div><div class="t d" style="left:541px;width:79px">0,00</div><div class="t d" style="left:621px;width:79px">0,00</div><div class="t d" style="left:701px;width:103px">0,00</div><div class="t d" style="left:805px;width:79px">0,00</div><div class="t d" style="left:885px;width:79px">14,00</div><div class="t d" style="left:965px;width:84px">38,50</div><div class="t d" style="left:1050px;width:85px">-10,50</div><div class="t d" style="left:1136px;width:120px">0,00</div></div>
<div class="row" style="top:778px"><div class="t d dr" style="left:102px;width:118px">14/09/2014</div><div class="t d" style="left:221px;width:79px">37,00</div><div class="t d" style="left:301px;width:79px">0,00</div><div class="t d" style="left:381px;width:79px">0,00</div><div class="t d" style="left:461px;width:79px">0,00</div><div class="t d" style="left:541px;width:79px">0,00</div><div class="t d" style="left:621px;width:79px">0,00</div><div class="t d" style="left:701px;width:103px">0,00</div><div class="t d" style="left:805px;width:79px">0,00</div><div class="t d" style="left:885px;width:79px">0,00</div><div class="t d" style="left:965px;width:84px">37,00</div><div class="t d" style="left:1050px;width:85px">2,00</div><div class="t d" style="left:1136px;width:120px">0,00</div></div>
<div style="left:1257px;top:352px;width:353px;height:1px;background:#505050;"></div>
<div style="left:101px;top:320px;width:1156px;height:1px;background:#000;"></div>
<div style="left:101px;top:352px;width:1156px;height:1px;background:#000;"></div>
<div style="left:101px;top:369px;width:1156px;height:1px;background:#000;"></div>
<div style="left:101px;top:386px;width:1156px;height:1px;background:#000;"></div>
<div style="left:101px;top:403px;width:1156px;height:1px;background:#000;"></div>
<div style="left:101px;top:420px;width:1156px;height:1px;background:#000;"></div>
<div style="left:101px;top:437px;width:1156px;height:1px;background:#000;"></div>
<div style="left:101px;top:454px;width:1156px;height:1px;background:#000;"></div>
<div style="left:101px;top:471px;width:1156px;height:1px;background:#000;"></div>
<div style="left:101px;top:488px;width:1156px;height:1px;background:#000;"></div>
<div style="left:101px;top:505px;width:1156px;height:1px;background:#000;"></div>
<div style="left:101px;top:522px;width:1156px;height:1px;background:#000;"></div>
<div style="left:101px;top:539px;width:1156px;height:1px;background:#000;"></div>
<div style="left:101px;top:556px;width:1156px;height:1px;background:#000;"></div>
<div style="left:101px;top:573px;width:1156px;height:1px;background:#000;"></div>
<div style="left:101px;top:590px;width:1156px;height:1px;background:#000;"></div>
<div style="left:101px;top:607px;width:1156px;height:1px;background:#000;"></div>
<div style="left:101px;top:624px;width:1156px;height:1px;background:#000;"></div>
<div style="left:101px;top:641px;width:1156px;height:1px;background:#000;"></div>
<div style="left:101px;top:658px;width:1156px;height:1px;background:#000;"></div>
<div style="left:101px;top:675px;width:1156px;height:1px;background:#000;"></div>
<div style="left:101px;top:692px;width:1156px;height:1px;background:#000;"></div>
<div style="left:101px;top:709px;width:1156px;height:1px;background:#000;"></div>
<div style="left:101px;top:726px;width:1156px;height:1px;background:#000;"></div>
<div style="left:101px;top:743px;width:1156px;height:1px;background:#000;"></div>
<div style="left:101px;top:760px;width:1156px;height:1px;background:#000;"></div>
<div style="left:101px;top:777px;width:1156px;height:1px;background:#000;"></div>
<div style="left:101px;top:320px;width:1px;height:473px;background:#000;"></div>
<div style="left:220px;top:320px;width:1px;height:473px;background:#000;"></div>
<div style="left:300px;top:320px;width:1px;height:473px;background:#000;"></div>
<div style="left:380px;top:320px;width:1px;height:473px;background:#000;"></div>
<div style="left:460px;top:320px;width:1px;height:473px;background:#000;"></div>
<div style="left:540px;top:320px;width:1px;height:473px;background:#000;"></div>
<div style="left:620px;top:320px;width:1px;height:473px;background:#000;"></div>
<div style="left:700px;top:320px;width:1px;height:473px;background:#000;"></div>
<div style="left:804px;top:320px;width:1px;height:473px;background:#000;"></div>
<div style="left:884px;top:320px;width:1px;height:473px;background:#000;"></div>
<div style="left:964px;top:320px;width:1px;height:473px;background:#000;"></div>
<div style="left:1049px;top:320px;width:1px;height:473px;background:#000;"></div>
<div style="left:1135px;top:320px;width:1px;height:473px;background:#000;"></div>
<div style="left:1256px;top:320px;width:1px;height:473px;background:#000;"></div>
<div style="left:22px;top:351px;width:80px;height:3px;background:#000;"></div>
<div style="left:22px;top:368px;width:76px;height:3px;background:#000;"></div>
<div style="left:22px;top:351px;width:2px;height:20px;background:#000;"></div>
<div style="left:100px;top:351px;width:2px;height:16px;background:#000;"></div>
<div style="left:98px;top:366px;width:6px;height:6px;background:#fff;"></div>
<div style="left:100px;top:366px;width:2px;height:1px;background:#000;"></div>
<div style="left:99px;top:367px;width:5px;height:5px;background:#000;"></div>
<div style="left:0px;top:793px;width:1610px;height:16px;background:#dde1e8;"></div>
<div style="left:0px;top:793px;width:1610px;height:1px;background:#c9ced6;"></div>
<svg class="abs" style="left:0;top:794px" width="58" height="15"><g fill="#3f4652"><rect x="3" y="4" width="1.3" height="7"/><polygon points="9,4 9,11 5,7.5"/><polygon points="22,4 22,11 18,7.5"/><polygon points="32,4 32,11 36,7.5"/><polygon points="46,4 46,11 50,7.5"/><rect x="50.7" y="4" width="1.3" height="7"/></g></svg>
<svg class="abs" style="left:58px;top:793px" width="520" height="16"><path d="M0.5,0.5 L0.5,13 Q0.5,15.5 3,15.5 L89.5,15.5 L89.5,0.5" fill="#e8ebf0" stroke="#9ba2ac"/><path d="M89,0 L89,15.5 L171.5,15.5 L184.5,0 Z" fill="#fff"/><path d="M89.5,0 L89.5,15.5 L171.5,15.5 L184,0.5" fill="none" stroke="#8d949e"/><path d="M184,0.5 L515,0.5" fill="none" stroke="#c3c8d0"/><path d="M171.5,15.5 L502,15.5" fill="none" stroke="#a3a9b3"/><path d="M269.6,15.5 L281.6,0.5" fill="none" stroke="#9ba2ac"/><path d="M369,15.5 L381.4,0.5" fill="none" stroke="#9ba2ac"/><path d="M469,15.5 L481.6,0.5" fill="none" stroke="#9ba2ac"/><path d="M502,15.5 L514.5,0.5" fill="none" stroke="#9ba2ac"/><polygon points="79,15 83,11 87,15" fill="#fff" stroke="#9ba2ac" stroke-width="0.8"/><polygon points="167.5,15 171.5,11 175.5,15" fill="#fff" stroke="#9ba2ac" stroke-width="0.8"/><polygon points="265.6,15 269.6,11 273.6,15" fill="#fff" stroke="#9ba2ac" stroke-width="0.8"/><polygon points="365,15 369,11 373,15" fill="#fff" stroke="#9ba2ac" stroke-width="0.8"/><polygon points="465,15 469,11 473,15" fill="#fff" stroke="#9ba2ac" stroke-width="0.8"/><rect x="485.5" y="5.5" width="11" height="7" rx="1.5" fill="#e9eefc" stroke="#5b6b8c"/><rect x="488" y="12.5" width="7" height="1.5" fill="#5b6b8c"/><path d="M485.5,1.5 L485.5,7.5 M482.5,4.5 L488.5,4.5 M483.5,2.5 L487.5,6.5 M487.5,2.5 L483.5,6.5" stroke="#e6a21c" stroke-width="1.1"/></svg>
<div class="t tab" style="left:72px;top:795px;width:66px;height:15px;letter-spacing:0.15px">Enter hours</div>
<div class="t tab tabact" style="left:156px;top:794px;width:74px;height:15px;">View Hours</div>
<div class="t tab" style="left:246px;top:795px;width:73px;height:15px;">Data Storage</div>
<div class="t tab" style="left:343px;top:795px;width:77px;height:15px;">Employee List</div>
<div class="t tab" style="left:445px;top:795px;width:74px;height:15px;">bank holidays</div>
<div style="left:962px;top:794px;width:8px;height:15px;background:#fff;border:1px solid #b4bac4;border-radius:2px"></div>
<div style="left:965px;top:798px;width:1px;height:8px;background:#6b7280;"></div>
<svg class="abs" style="left:972px;top:794px" width="12" height="15"><polygon points="8,3.5 8,11.5 3,7.5" fill="#3f4652"/></svg>
<div style="left:987px;top:794px;width:434px;height:15px;background:linear-gradient(#f3f5f8,#e3e6eb);border:1px solid #b0b6c0;border-radius:2px"></div>
<div style="left:1200px;top:798px;width:1px;height:7px;background:#7b8290;"></div>
<div style="left:1202px;top:798px;width:1px;height:7px;background:#7b8290;"></div>
<div style="left:1204px;top:798px;width:1px;height:7px;background:#7b8290;"></div>
<div style="left:1206px;top:798px;width:1px;height:7px;background:#7b8290;"></div>
<div style="left:0px;top:809px;width:1610px;height:1px;background:#9aa0a8;"></div>
<div style="left:0px;top:810px;width:1610px;height:15px;background:linear-gradient(#e4e7eb,#cdd1d7);"></div>
<div class="t sb" style="left:4px;top:813px;width:80px;height:17px;font-size:12px">Working...</div>
<div style="left:833px;top:811px;width:1px;height:14px;background:#8f96a0;"></div>
<div style="left:834px;top:811px;width:1px;height:14px;background:#eef0f3;"></div>
<div style="left:1431px;top:811px;width:1px;height:14px;background:#8f96a0;"></div>
<div style="left:1432px;top:811px;width:1px;height:14px;background:#eef0f3;"></div>
<div style="left:1436px;top:811px;width:19px;height:18px;background:linear-gradient(#ffe9a3,#ffd257);border:1px solid #e0a62c;border-radius:3px"></div>
<svg class="abs" style="left:1436px;top:810px" width="60" height="15"><rect x="3.5" y="5.5" width="12" height="10" fill="#fff" stroke="#7b8494"/><path d="M3.5,9 H15.5 M3.5,12.5 H15.5 M7.5,5.5 V15 M11.5,5.5 V15" stroke="#7b8494" fill="none"/><rect x="21.5" y="4.5" width="13" height="11" fill="#b9bec6" stroke="#7a818c"/><rect x="24.5" y="6.5" width="7" height="9" fill="#fff" stroke="#7a818c"/><path d="M26,9.5 H30 M26,11.5 H30 M26,13.5 H30" stroke="#9aa0a8"/><rect x="40.5" y="4.5" width="13" height="11" fill="#aeb4bd" stroke="#7a818c"/><rect x="42" y="5" width="3" height="6" fill="#fff"/><rect x="46" y="5" width="3" height="6" fill="#fff"/></svg>
<div class="t sb sbz" style="left:1503px;top:812px;width:32px;height:15px;">100 %</div>
<svg class="abs" style="left:1538px;top:810px" width="72" height="15"><line x1="18" y1="9.5" x2="66" y2="9.5" stroke="#9aa0a8"/><circle cx="10" cy="9.5" r="7.3" fill="#f4f5f7" stroke="#8a919b"/><rect x="5.5" y="8.5" width="9" height="2" fill="#4a505a"/><path d="M64.5,3.5 H72 V11 L68.5,15 L64.5,11 Z" fill="#f4f5f7" stroke="#8a919b"/></svg>
</div></body></html>
